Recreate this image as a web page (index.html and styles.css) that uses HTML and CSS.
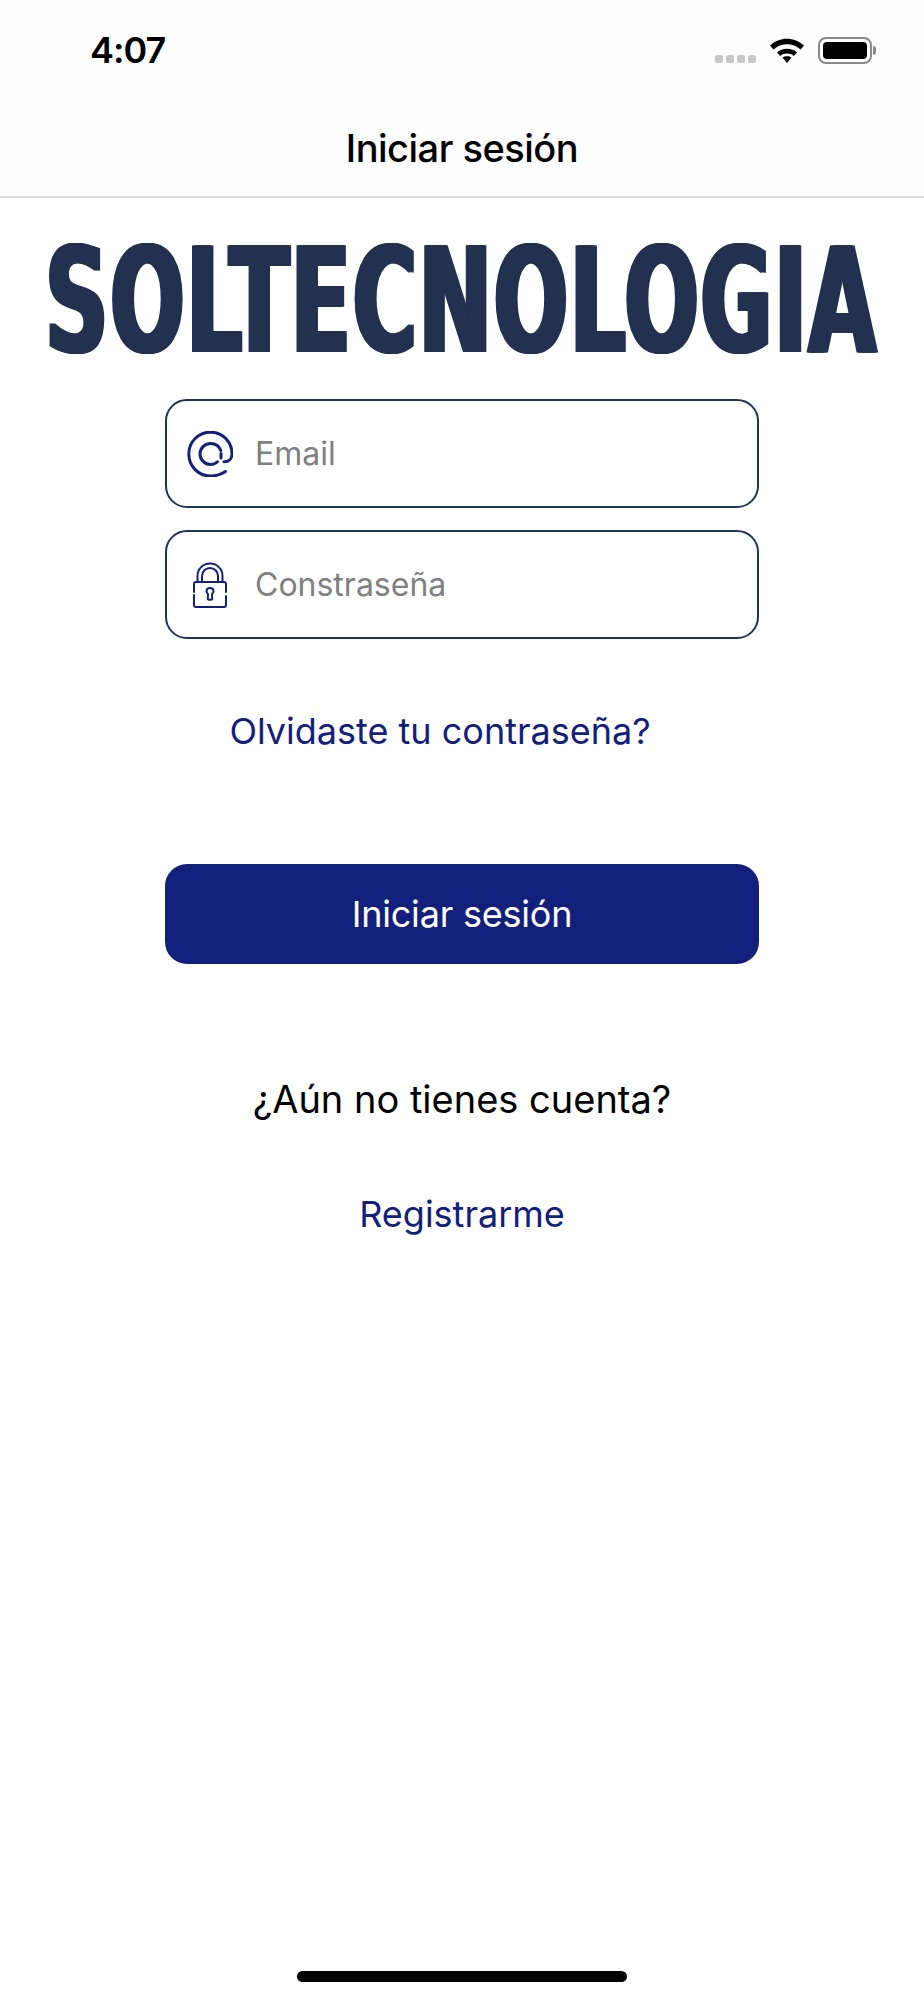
FILE: index.html
```html
<!DOCTYPE html>
<html lang="es">

<head>
    <meta http-equiv="Content-Type" content="text/html; charset=utf-8"/>
    <title>Iniciar sesión</title>
    <link rel="stylesheet" href="styles.css">
</head>

<body>

<div class="screen">
    <header class="top-bar">
        <div class="status-bar">
            <span class="clock">4:07</span>
            <div class="status-icons">
                <div class="signal"><i></i><i></i><i></i><i></i></div>
                <svg class="wifi" width="36" height="26" viewBox="0 0 36 26">
                    <path d="M1 8.5C10.5 -.5 25.500 -.5 35 8.500L31.500 12.500C24 5.500 12 5.500 4.500 12.500Z" fill="#000"/>
                    <path d="M8 15.500C13.500 10.500 22.500 10.500 28 15.500L24.800 19C21 15.800 15 15.800 11.200 19Z" fill="#000"/>
                    <path d="M13.500 20.500C16 18.800 20 18.800 22.500 20.500L18 26Z" fill="#000"/>
                </svg>
                <div class="battery"><div class="battery-level"></div></div>
                <div class="battery-cap"></div>
            </div>
        </div>
        <div class="nav-bar">Iniciar sesión</div>
    </header>

    <div class="logo-row">
        <div class="logo">SOLTECNOLOGIA</div>
    </div>

    <form class="login-form">
        <div class="field">
            <svg class="field-icon" width="46" height="46" viewBox="0 0 46 46" fill="none" stroke="#13207b" stroke-width="3" stroke-linecap="round">
                <path d="M38.500 40.500C34.500 43.300 29 45 23.500 45C11.500 45 1.800 35.200 1.800 23C1.800 10.800 11.500 1.200 23.500 1.200C35.500 1.200 45 10.800 45 23C45 27.500 42 30.800 37 30.800"/>
                <path d="M33.800 19.500C32.300 15.300 28.300 12.500 23.500 12.500C17.700 12.500 13 17.200 13 23C13 28.800 17.700 33.500 23.500 33.500C26.300 33.500 28.800 32.500 30.500 30.800"/>
                <path d="M34 22.500V27"/>
            </svg>
            <span class="placeholder">Email</span>
        </div>
        <div class="field">
            <svg class="field-icon" width="46" height="46" viewBox="0 0 46 46" fill="none" stroke="#13207b" stroke-width="2" stroke-linecap="round" stroke-linejoin="round">
                <path d="M10.500 20V14C10.500 7 16 1.500 23 1.500C30 1.500 35.500 7 35.500 14V20"/>
                <path d="M15 20V14C15 9.500 18.500 6 23 6C27.500 6 31 9.500 31 14V20"/>
                <path d="M7 30V22C7 20.800 7.800 20 9 20H37C38.200 20 39 20.800 39 22V30M39 34V43C39 44.200 38.200 45 37 45H9C7.800 45 7 44.200 7 43V33"/>
                <path d="M23 26C20.800 26 19.500 27.500 19.500 29.300C19.500 30.500 20.200 31.500 21 32L20.800 37C20.800 38 25.200 38 25.200 37L25 32C25.800 31.500 26.500 30.500 26.500 29.300C26.500 27.500 25.200 26 23 26Z"/>
            </svg>
            <span class="placeholder">Constraseña</span>
        </div>

        <a class="link forgot">Olvidaste tu contraseña?</a>

        <button class="submit" type="button">Iniciar sesión</button>

        <p class="no-account">¿Aún no tienes cuenta?</p>

        <a class="link register">Registrarme</a>
    </form>

    <div class="home-row">
        <div class="home-indicator"></div>
    </div>
</div>

</body>

</html>
```

FILE: styles.css
```css
* {
    box-sizing: border-box;
}

body {
    margin: 0;
    background-color: #fff;
    font-family: Inter, "Noto Sans", sans-serif;
    color: #000;
}

.screen {
    display: flex;
    flex-direction: column;
    height: 2000px;
    overflow: hidden;
}

.top-bar {
    height: 198px;
    background-color: #fdfdfd;
    border-bottom: 2px solid #dcdcdc;
}

.status-bar {
    display: flex;
    align-items: center;
    justify-content: space-between;
    height: 100px;
    padding: 0 48px 0 90px;
}

.clock {
    font-size: 36px;
    font-weight: 600;
    letter-spacing: -1px;
}

.status-icons {
    display: flex;
    align-items: center;
}

.signal {
    display: flex;
    gap: 3px;
    margin: 18px 13px 0 0;
}

.signal i {
    width: 8px;
    height: 8px;
    border-radius: 2px;
    background-color: #c8c8c8;
}

.wifi {
    margin-right: 13px;
}

.battery {
    width: 54px;
    height: 27px;
    padding: 3px;
    border: 2px solid #8a8a8a;
    border-radius: 8px;
}

.battery-level {
    height: 100%;
    border-radius: 4px;
    background-color: #000;
}

.battery-cap {
    width: 3px;
    height: 9px;
    margin-left: 1px;
    border-radius: 0 3px 3px 0;
    background-color: #8a8a8a;
}

.nav-bar {
    font-size: 38px;
    font-weight: 500;
    line-height: 96px;
    text-align: center;
    letter-spacing: -.5px;
}

.logo-row {
    display: flex;
    justify-content: center;
    height: 201px;
    padding-top: 34px;
}

.logo {
    font-family: "DejaVu Sans", sans-serif;
    font-size: 140px;
    font-weight: 700;
    line-height: 140px;
    letter-spacing: 3px;
    color: #22314f;
    white-space: nowrap;
    transform: scale(.6245, 1.05);
    text-shadow: 2px 0 #22314f, -2px 0 #22314f, 4px 0 #22314f, -4px 0 #22314f;
}

.login-form {
    display: flex;
    flex-direction: column;
    align-items: center;
}

.field {
    display: flex;
    align-items: center;
    width: 594px;
    height: 109px;
    margin-bottom: 22px;
    padding-left: 20px;
    border: 2px solid #1d3557;
    border-radius: 22px;
}

.field-icon {
    flex-shrink: 0;
}

.placeholder {
    margin-left: 22px;
    font-size: 32px;
    color: #808080;
}

.link {
    font-size: 36px;
    color: #13207b;
}

.forgot {
    margin-top: 48px;
    margin-right: 44px;
}

.submit {
    width: 594px;
    height: 100px;
    margin-top: 111px;
    border: 0;
    border-radius: 22px;
    background-color: #13207b;
    font-family: inherit;
    font-size: 36px;
    letter-spacing: -.2px;
    color: #fff;
}

.no-account {
    margin: 112px 0 0;
    font-size: 38px;
}

.register {
    margin-top: 70px;
}

.home-row {
    display: flex;
    justify-content: center;
    margin-top: auto;
    padding-bottom: 18px;
}

.home-indicator {
    width: 330px;
    height: 11px;
    border-radius: 6px;
    background-color: #000;
}
```
